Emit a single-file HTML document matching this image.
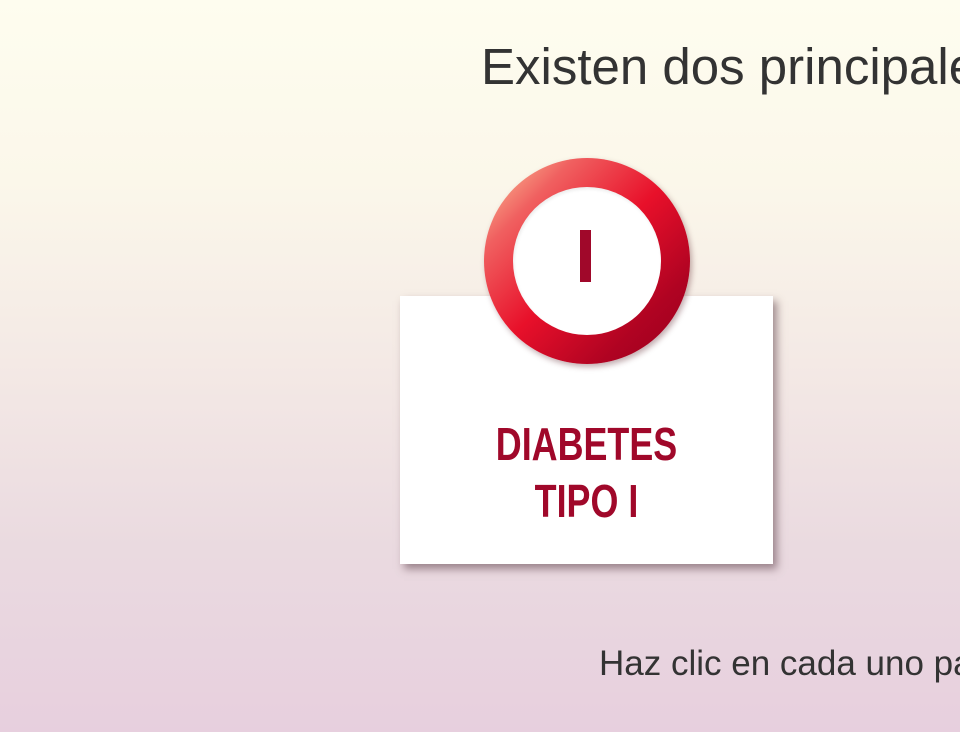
<!DOCTYPE html>
<html><head><meta charset="utf-8"><style>
html,body{margin:0;padding:0}
body{width:960px;height:732px;overflow:hidden;position:relative;
background:linear-gradient(to bottom,#fefdef 0%,#fbf7ea 25%,#f2e6e4 55%,#eadae0 75%,#e7cfde 100%);
font-family:"Liberation Sans",sans-serif;color:#333}
.h{position:absolute;left:481px;top:37px;font-size:51px;white-space:nowrap;line-height:60px}
.f{position:absolute;left:599px;top:643px;font-size:35px;white-space:nowrap;line-height:42px}
.card{position:absolute;left:400px;top:296px;width:373px;height:268px;background:#fff;
box-shadow:4px 5px 8px rgba(90,60,70,.55)}
.t{position:absolute;left:400px;width:373px;text-align:center;top:416px;
font-weight:bold;color:#a0082a;font-size:46px;line-height:57px;transform:scaleX(0.78);transform-origin:186.5px 0}
.ring{position:absolute;left:484px;top:158px;width:206px;height:206px;border-radius:50%;
background:linear-gradient(135deg,#fdd0a0 0%,#f06060 22%,#e8102a 50%,#b00322 78%,#98001e 100%);
box-shadow:2px 3px 6px rgba(80,20,30,.35)}
.inner{position:absolute;left:29px;top:29px;width:148px;height:148px;border-radius:50%;background:#fff;
box-shadow:inset 1px 2px 3px rgba(0,0,0,.08)}
.bar{position:absolute;left:580px;top:230px;width:11px;height:52px;background:#a0082a}
</style></head><body>
<div class="h">Existen dos principales</div>
<div class="card"></div>
<div class="t">DIABETES<br>TIPO I</div>
<div class="ring"><div class="inner"></div></div>
<div class="bar"></div>
<div class="f">Haz clic en cada uno para</div>
</body></html>
